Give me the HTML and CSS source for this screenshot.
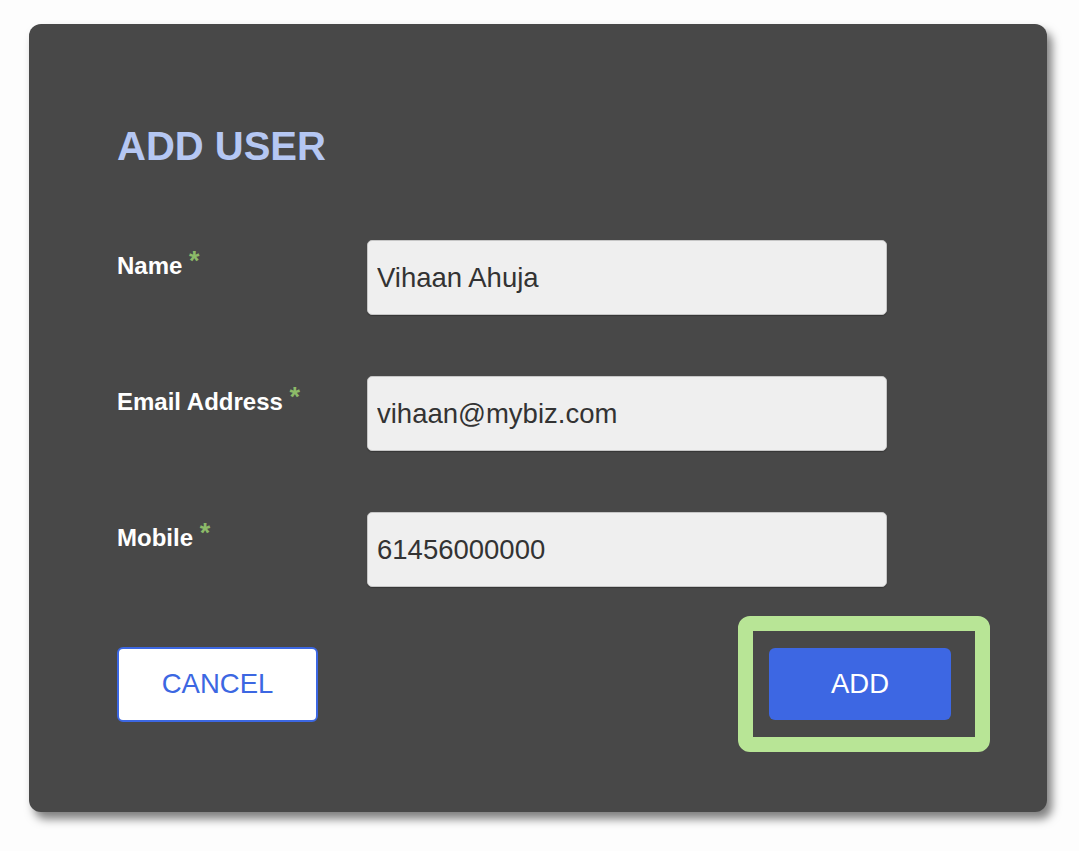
FILE: index.html
```html
<!DOCTYPE html>
<html lang="en">
<head>
<meta charset="utf-8">
<title>Add User</title>
<link rel="stylesheet" href="styles.css">
</head>
<body>
<div class="card">
  <h1 class="title">ADD USER</h1>
  <form class="form">
    <div class="row">
      <label class="label" for="name">Name <span class="req">*</span></label>
      <input class="field" id="name" type="text" value="Vihaan Ahuja">
    </div>
    <div class="row">
      <label class="label" for="email">Email Address <span class="req">*</span></label>
      <input class="field" id="email" type="text" value="vihaan@mybiz.com">
    </div>
    <div class="row">
      <label class="label" for="mobile">Mobile <span class="req">*</span></label>
      <input class="field" id="mobile" type="text" value="61456000000">
    </div>
    <div class="actions">
      <button type="button" class="btn btn-cancel">CANCEL</button>
      <div class="focus-ring">
        <button type="button" class="btn btn-add">ADD</button>
      </div>
    </div>
  </form>
</div>
</body>
</html>
```
FILE: styles.css
```css
html, body {
  margin: 0;
  padding: 0;
  background: #fdfdfd;
}
body {
  padding: 24px 0 39px 29px;
  font-family: "Liberation Sans", Arial, Helvetica, sans-serif;
}
.card {
  box-sizing: border-box;
  width: 1018px;
  height: 788px;
  background: #484848;
  border-radius: 12px;
  box-shadow: 5px 7px 10px rgba(0, 0, 0, 0.5);
  padding: 102px 57px 0 88px;
}
.title {
  margin: 0;
  font-size: 40px;
  line-height: 40px;
  font-weight: bold;
  color: #b5c7f3;
}
.form {
  margin-top: 74px;
  display: flex;
  flex-direction: column;
  gap: 61px;
}
.row {
  display: grid;
  grid-template-columns: 250px 520px;
  align-items: start;
}
.label {
  padding-top: 13px;
  font-size: 24px;
  line-height: 24px;
  font-weight: bold;
  color: #ffffff;
}
.req {
  color: #8cba68;
  font-size: 27px;
  position: relative;
  top: -4px;
}
.field {
  box-sizing: border-box;
  width: 520px;
  height: 75px;
  margin: 0;
  padding: 0 9px;
  border: 1px solid #c6c6c6;
  border-radius: 5px;
  background: #efefef;
  box-shadow: 0 1px 1px rgba(0, 0, 0, 0.25);
  font-family: "Liberation Sans", Arial, Helvetica, sans-serif;
  font-size: 27.5px;
  color: #333333;
  outline: none;
}
.actions {
  margin-top: -32px;
  display: flex;
  justify-content: space-between;
  align-items: center;
}
.btn {
  box-sizing: border-box;
  margin: 0;
  font-family: "Liberation Sans", Arial, Helvetica, sans-serif;
  font-size: 27.5px;
  cursor: pointer;
}
.btn-cancel {
  width: 201px;
  height: 75px;
  background: #ffffff;
  color: #3c67e2;
  border: 2px solid #3c67e2;
  border-radius: 6px;
}
.focus-ring {
  border: 15px solid #b8e596;
  border-radius: 12px;
  padding: 17px 24px 17px 16px;
}
.btn-add {
  display: block;
  width: 182px;
  height: 72px;
  background: #3d67e3;
  color: #ffffff;
  border: none;
  border-radius: 6px;
}
```
